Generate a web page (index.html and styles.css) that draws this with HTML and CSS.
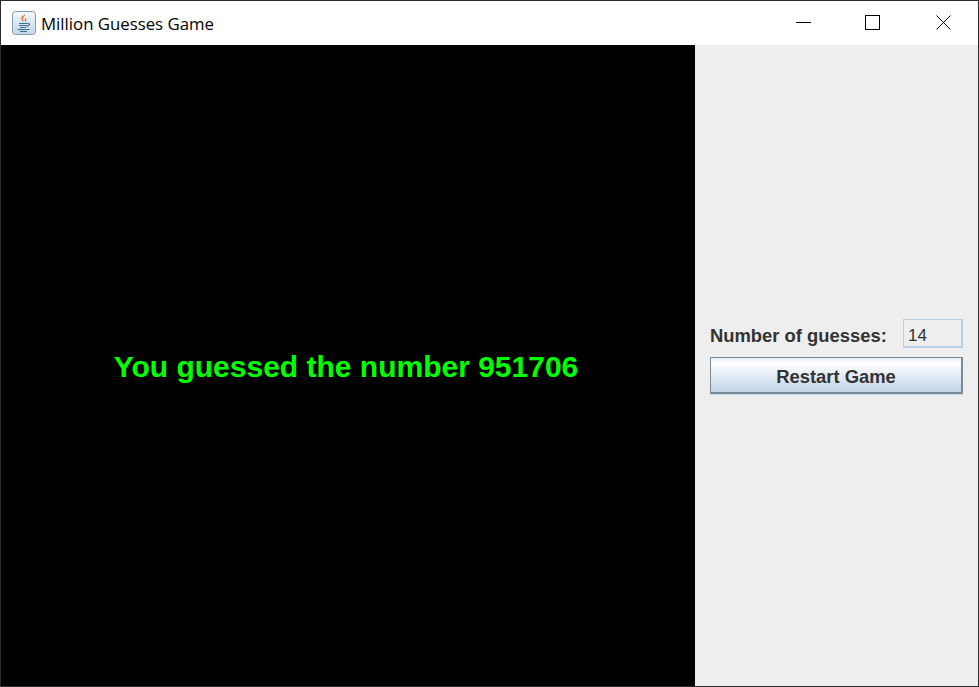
FILE: index.html
```html
<!DOCTYPE html>
<html lang="en">

<head>
    <meta charset="UTF-8">
    <title>Million Guesses Game</title>
    <link rel="stylesheet" href="styles.css">
</head>

<body>
    <div class="window">
        <div class="titlebar">
            <svg class="app-icon" width="24" height="24" viewBox="0 0 24 24">
                <defs>
                    <linearGradient id="tile" x1="0" y1="0" x2="0" y2="1">
                        <stop offset="0" stop-color="#f4f8fc" />
                        <stop offset="1" stop-color="#c3d6e8" />
                    </linearGradient>
                </defs>
                <rect x="0.5" y="0.5" width="23" height="23" rx="3" fill="url(#tile)" stroke="#7f9ab3" />
                <path d="M13 3c1 2-3 3.500-2 6 .4 1 1 1.500 1.200 2-2-1-3.500-2.500-2.800-4.500C9.900 5 12 4.500 13 3z" fill="#e2762a" />
                <path d="M14.500 6.500c-1.500 1-2.500 2-1.500 3.500.3.500.4 1 .2 1.300 1.300-.8 1.600-1.700 1-2.700-.4-.7-.3-1.300.3-2.100z" fill="#e2762a" />
                <path d="M7 12.500h8.500M7 14.500h8M8 16.500h6M5.500 18.500h12M8 20.500h7" stroke="#3f6d8f" stroke-width="1.200" fill="none" />
                <path d="M15.500 12.500c2.500-.5 2.800 2.300-.8 3" stroke="#3f6d8f" stroke-width="1.200" fill="none" />
            </svg>
            <span class="title">Million Guesses Game</span>
            <div class="controls">
                <div class="control control-shift">
                    <svg width="16" height="16" viewBox="0 0 16 16">
                        <path d="M0 7.500h15" stroke="#000" fill="none" />
                    </svg>
                </div>
                <div class="control">
                    <svg width="16" height="16" viewBox="0 0 16 16">
                        <rect x="0.5" y="0.500" width="14" height="14" stroke="#000" fill="none" />
                    </svg>
                </div>
                <div class="control control-shift">
                    <svg width="16" height="16" viewBox="0 0 16 16">
                        <path d="M0.500 0.500l14 14M14.500 0.500l-14 14" stroke="#000" fill="none" />
                    </svg>
                </div>
            </div>
        </div>
        <div class="content">
            <div class="board">
                <div class="message">You guessed the number 951706</div>
            </div>
            <div class="side">
                <div class="score-row">
                    <label class="score-label">Number of guesses:</label>
                    <div class="score-field">14</div>
                </div>
                <button class="restart">Restart Game</button>
            </div>
        </div>
    </div>
</body>

</html>
```

FILE: styles.css
```css
* {
    margin: 0;
    padding: 0;
    box-sizing: border-box;
}

html,
body {
    width: 979px;
    height: 687px;
    overflow: hidden;
}

.window {
    width: 979px;
    height: 687px;
    border: 1px solid #2b2b2b;
    display: flex;
    flex-direction: column;
    background: #fff;
}

.titlebar {
    height: 44px;
    display: flex;
    align-items: center;
    padding-left: 11px;
    background: #fff;
}

.app-icon {
    margin-right: 5px;
}

.title {
    font-family: "Open Sans", "Noto Sans", sans-serif;
    font-size: 16.8px;
    color: #000;
}

.controls {
    margin-left: auto;
    display: flex;
    height: 100%;
}

.control {
    width: 70px;
    display: flex;
    align-items: center;
    justify-content: center;
}

.control-shift {
    padding-left: 2px;
}

.content {
    flex: 1;
    display: flex;
}

.board {
    width: 694px;
    background: #000;
    display: flex;
    align-items: center;
    justify-content: center;
    padding: 3px 4px 0 0;
}

.message {
    font-family: "Liberation Sans", Arial, sans-serif;
    font-weight: bold;
    font-size: 30px;
    color: #00ff00;
}

.side {
    flex: 1;
    background: #eeeeee;
    display: flex;
    flex-direction: column;
    justify-content: center;
    padding: 0 15px 18px;
    gap: 9px;
}

.score-row {
    display: flex;
    align-items: center;
    justify-content: space-between;
}

.score-label {
    padding-top: 6px;
    font-family: "Liberation Sans", Arial, sans-serif;
    font-weight: bold;
    font-size: 18.4px;
    color: #333333;
}

.score-field {
    width: 60px;
    height: 29px;
    border: 1px solid #b8cfe5;
    border-bottom-width: 2px;
    border-right-width: 2px;
    padding-left: 4px;
    font-family: "Liberation Sans", Arial, sans-serif;
    font-size: 17px;
    line-height: 32px;
    color: #333333;
}

.restart {
    height: 37px;
    margin-bottom: 1px;
    padding-top: 5px;
    border: 1px solid #7a8a99;
    border-width: 1px 2px 2px 1px;
    box-shadow: 0 1px 0 #c5d6e6;
    background: linear-gradient(#e4ecf4 0%, #ffffff 15%, #dde8f2 60%, #bfd3e6 100%);
    font-family: "Liberation Sans", Arial, sans-serif;
    font-weight: bold;
    font-size: 18.4px;
    color: #333333;
}
```
